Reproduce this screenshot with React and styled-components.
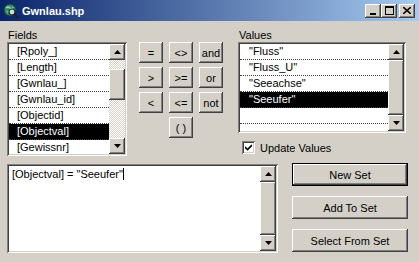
import React from 'react';
import styled, { createGlobalStyle } from 'styled-components';

const Global = createGlobalStyle`
    body {
        margin: 0;
        background: #d4d0c8;
    }
`

const raised = `
    box-shadow: inset -1px -1px #404040, inset 1px 1px #ffffff, inset -2px -2px #808080, inset 2px 2px #d4d0c8;
`

const sunken = `
    box-shadow: inset 1px 1px #808080, inset -1px -1px #ffffff, inset 2px 2px #404040, inset -2px -2px #d4d0c8;
`

const Window = styled('div')`
    width: 419px;
    height: 262px;
    background: #d4d0c8;
    overflow: hidden;
    font-family: "Liberation Sans", Arial, sans-serif;
    font-size: 11px;
    color: #000;
`

const TitleBar = styled('div')`
    height: 21px;
    display: flex;
    align-items: center;
    padding: 0 4px 0 3px;
    background: linear-gradient(to right, #0a246a, #a6caf0);
`

const TitleText = styled('div')`
    margin-left: 3px;
    color: #fff;
    font-weight: bold;
    font-size: 11px;
    flex: 1;
`

const CaptionButton = styled('div')`
    width: 16px;
    height: 14px;
    background: #d4d0c8;
    ${raised}
    display: flex;
    align-items: center;
    justify-content: center;
    margin-left: ${p => p.$gap || 0}px;
`

const Content = styled('div')`
    padding: 7px 0 0 7px;
`

const TopRow = styled('div')`
    display: flex;
    align-items: flex-start;
`

const Column = styled('div')`
    width: ${p => p.$width}px;
    margin-left: ${p => p.$left || 0}px;
    display: flex;
    flex-direction: column;
`

const Label = styled('div')`
    height: 14px;
    line-height: 14px;
    padding-left: 1px;
`

const ListBox = styled('div')`
    height: ${p => p.$height}px;
    box-sizing: border-box;
    padding: 2px;
    background: #fff;
    ${sunken}
    display: flex;
`

const Items = styled('div')`
    flex: 1;
    overflow: hidden;
`

const Item = styled('div')`
    height: 16px;
    line-height: 15px;
    box-sizing: border-box;
    border-bottom: 1px dotted #404040;
    padding-left: ${p => p.$indent}px;
    white-space: nowrap;
    background: ${p => p.$selected ? '#000' : 'transparent'};
    color: ${p => p.$selected ? '#fff' : '#000'};
`

const ScrollBar = styled('div')`
    width: 16px;
    display: flex;
    flex-direction: column;
`

const ArrowButton = styled('div')`
    width: 16px;
    height: 16px;
    flex: none;
    background: #d4d0c8;
    ${raised}
    display: flex;
    align-items: center;
    justify-content: center;
`

const Track = styled('div')`
    flex: 1;
    display: flex;
    flex-direction: column;
    background: repeating-conic-gradient(#ffffff 0 25%, #d4d0c8 0 50%) 0 0 / 2px 2px;
`

const Thumb = styled('div')`
    height: ${p => p.$size ? p.$size + 'px' : 'auto'};
    flex: ${p => p.$size ? 'none' : '1'};
    margin-top: ${p => p.$offset || 0}px;
    background: #d4d0c8;
    ${raised}
`

const OpGrid = styled('div')`
    margin: 14px 0 0 12px;
    display: grid;
    grid-template-columns: repeat(3, 24px);
    grid-auto-rows: 21px;
    column-gap: 6px;
    row-gap: 4px;
`

const Button = styled('div')`
    background: #d4d0c8;
    ${raised}
    display: flex;
    align-items: center;
    justify-content: center;
    box-sizing: border-box;
    grid-column: ${p => p.$col || 'auto'};
    font-size: ${p => p.$small ? '10px' : '11px'};
`

const CheckRow = styled('div')`
    display: flex;
    align-items: center;
    margin: 8px 0 0 4px;
    height: 13px;
`

const CheckBox = styled('div')`
    width: 13px;
    height: 13px;
    box-sizing: border-box;
    background: #fff;
    ${sunken}
    display: flex;
    align-items: center;
    justify-content: center;
    margin-right: 5px;
`

const BottomRow = styled('div')`
    display: flex;
    align-items: flex-start;
    margin-top: 7px;
`

const ExprBox = styled('div')`
    width: 271px;
    height: 89px;
    margin-top: 1px;
    box-sizing: border-box;
    padding: 2px;
    background: #fff;
    ${sunken}
    display: flex;
`

const ExprText = styled('div')`
    flex: 1;
    padding: 2px 3px;
    white-space: nowrap;
`

const Caret = styled('span')`
    display: inline-block;
    width: 1px;
    height: 12px;
    background: #000;
    vertical-align: -2px;
`

const ActionCol = styled('div')`
    width: 116px;
    margin-left: 14px;
    display: flex;
    flex-direction: column;
    gap: 10px;
`

const ActionButton = styled(Button)`
    height: 23px;
    ${p => p.$default && `
        border: 1px solid #000;
        box-shadow: inset -1px -1px #404040, inset 1px 1px #ffffff, inset -2px -2px #808080;
    `}
`

const Arrow = ({ down }) => (
    <svg width="7" height="4" viewBox="0 0 7 4">
        {down ? <polygon points="0,0 7,0 3.5,4" fill="#000" /> : <polygon points="0,4 7,4 3.5,0" fill="#000" />}
    </svg>
)

const Scroll = ({ offset, size, checkered }) => (
    <ScrollBar>
        <ArrowButton><Arrow /></ArrowButton>
        {checkered ? (
            <Track>
                <Thumb $offset={offset} $size={size} />
            </Track>
        ) : (
            <Thumb />
        )}
        <ArrowButton><Arrow down /></ArrowButton>
    </ScrollBar>
)

const GlobeIcon = () => (
    <svg width="16" height="16" viewBox="0 0 16 16">
        <circle cx="7" cy="7" r="6" fill="#2f8f6a" stroke="#1a3a3a" strokeWidth="1" />
        <path d="M3 5 Q5 3 7 5 T10 4 M4 9 Q6 8 8 10" stroke="#9fd8a0" strokeWidth="1.2" fill="none" />
        <circle cx="9" cy="9" r="3" fill="#bfe6f0" stroke="#202020" strokeWidth="1.2" />
        <line x1="11" y1="11" x2="15" y2="15" stroke="#202020" strokeWidth="2" />
    </svg>
)

const fields = ['[Rpoly_]', '[Length]', '[Gwnlau_]', '[Gwnlau_id]', '[Objectid]', '[Objectval]', '[Gewissnr]']
const values = ['"Fluss"', '"Fluss_U"', '"Seeachse"', '"Seeufer"', '', '']

const App = () => {
    return (
        <Window>
            <Global />
            <TitleBar>
                <GlobeIcon />
                <TitleText>Gwnlau.shp</TitleText>
                <CaptionButton>
                    <svg width="8" height="8" viewBox="0 0 8 8"><rect x="1" y="6" width="6" height="2" fill="#000" /></svg>
                </CaptionButton>
                <CaptionButton>
                    <svg width="9" height="9" viewBox="0 0 9 9"><rect x="0.5" y="0.5" width="8" height="8" fill="none" stroke="#000" /><rect x="0" y="0" width="9" height="2" fill="#000" /></svg>
                </CaptionButton>
                <CaptionButton $gap={2}>
                    <svg width="8" height="7" viewBox="0 0 8 7"><path d="M0 0 L8 7 M8 0 L0 7" stroke="#000" strokeWidth="1.6" /></svg>
                </CaptionButton>
            </TitleBar>
            <Content>
                <TopRow>
                    <Column $width={120}>
                        <Label>Fields</Label>
                        <ListBox $height={114}>
                            <Items>
                                {fields.map(f => (
                                    <Item key={f} $indent={8} $selected={f === '[Objectval]'}>{f}</Item>
                                ))}
                            </Items>
                            <Scroll checkered offset={9} size={31} />
                        </ListBox>
                    </Column>
                    <OpGrid>
                        <Button>=</Button>
                        <Button>&lt;&gt;</Button>
                        <Button>and</Button>
                        <Button>&gt;</Button>
                        <Button>&gt;=</Button>
                        <Button>or</Button>
                        <Button>&lt;</Button>
                        <Button>&lt;=</Button>
                        <Button>not</Button>
                        <Button $col={2}>( )</Button>
                    </OpGrid>
                    <Column $width={168} $left={15}>
                        <Label>Values</Label>
                        <ListBox $height={91}>
                            <Items>
                                {values.map((v, i) => (
                                    <Item key={i} $indent={9} $selected={v === '"Seeufer"'}>{v}</Item>
                                ))}
                            </Items>
                            <Scroll />
                        </ListBox>
                        <CheckRow>
                            <CheckBox>
                                <svg width="7" height="7" viewBox="0 0 7 7"><path d="M0 3 L2.5 5.5 L7 1" stroke="#000" strokeWidth="1.6" fill="none" /></svg>
                            </CheckBox>
                            Update Values
                        </CheckRow>
                    </Column>
                </TopRow>
                <BottomRow>
                    <ExprBox>
                        <ExprText>[Objectval] = "Seeufer"<Caret /></ExprText>
                        <Scroll />
                    </ExprBox>
                    <ActionCol>
                        <ActionButton $default>New Set</ActionButton>
                        <ActionButton>Add To Set</ActionButton>
                        <ActionButton>Select From Set</ActionButton>
                    </ActionCol>
                </BottomRow>
            </Content>
        </Window>
    );
};

export default App;
